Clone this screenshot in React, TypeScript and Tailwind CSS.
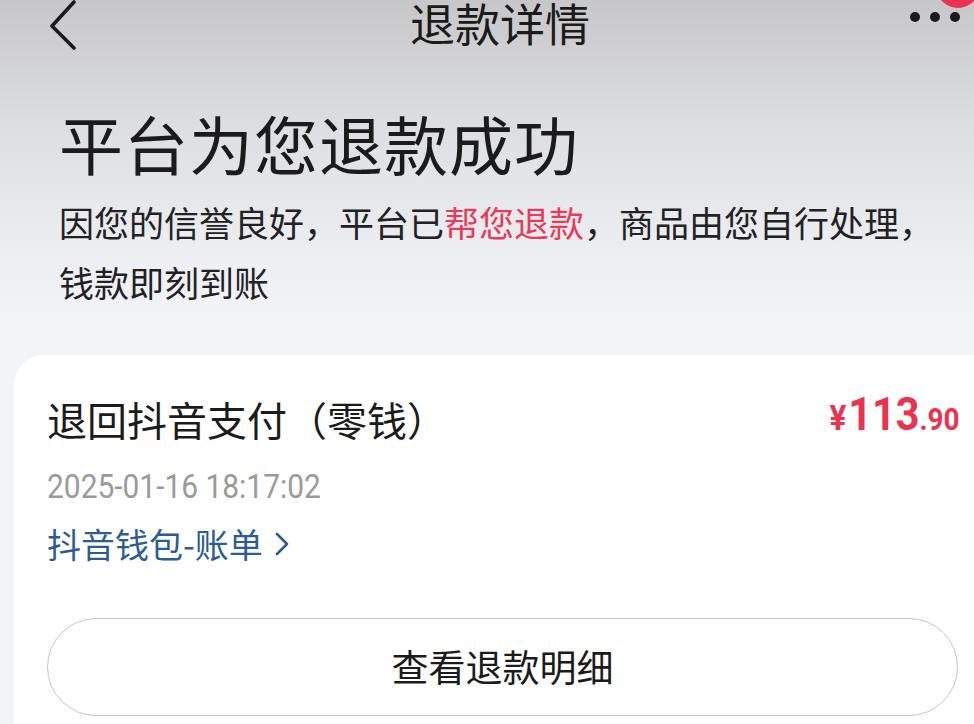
import React from 'react';

const cjk = { fontFamily: '"Noto Sans CJK SC", "Noto Sans", sans-serif' };
const num = { fontFamily: 'Roboto, "Noto Sans CJK SC", sans-serif' };

const App = () => {
  return (
    <div
      className="w-[974px] h-[724px] overflow-hidden bg-[linear-gradient(180deg,#c7c7c9_0px,#dcdde0_120px,#eeeff3_260px,#f3f4f8_330px,#f3f4f8_100%)] text-[#1b1b1b]"
      style={cjk}
    >
      {/* top bar */}
      <header className="relative h-[46px] flex items-center justify-center pl-[26px]">
        <svg className="absolute left-[46px] top-[0px]" width="34" height="50" viewBox="0 0 34 50" fill="none">
          <path d="M28 2 L6 26 L28 48" stroke="#1b1b1b" strokeWidth="3.6" strokeLinecap="round" strokeLinejoin="round" />
        </svg>
        <h1 className="text-[45px] leading-[46px] font-normal">退款详情</h1>
        <div className="absolute left-[910px] top-[12px] flex gap-[10px]">
          <span className="w-[10px] h-[10px] rounded-full bg-[#1b1b1b]" />
          <span className="w-[10px] h-[10px] rounded-full bg-[#1b1b1b]" />
          <span className="w-[10px] h-[10px] rounded-full bg-[#1b1b1b]" />
        </div>
        <span className="absolute left-[936px] top-[-36px] w-[44px] h-[44px] rounded-full bg-[#e8324f]" />
      </header>

      <div className="pl-[59px]">
        <h2 className="mt-[58px] text-[64px] leading-[76px] font-normal tracking-[1px]">平台为您退款成功</h2>
        <p className="mt-[12px] text-[35px] leading-[60px] text-[#222] whitespace-nowrap">
          因您的信誉良好，平台已<span className="text-[#e83a5a]">帮您退款</span>，商品由您自行处理，
          <br />
          钱款即刻到账
        </p>
      </div>

      {/* refund card */}
      <section className="mt-[43px] ml-[14px] -mr-[30px] bg-white rounded-[30px] pl-[33px] pr-[46px] pt-[37px] pb-[40px]">
        <div className="flex items-center justify-between">
          <span className="text-[40px] leading-[52px]">退回抖音支付（零钱）</span>
          <span className="flex items-baseline text-[#ea3350] font-bold -mt-[4px] -mr-[2px] scale-x-[0.9] origin-right" style={num}>
            <span className="text-[35px] mr-[2px]">¥</span>
            <span className="text-[46px] leading-[52px]">113</span>
            <span className="text-[31px]">.90</span>
          </span>
        </div>
        <div className="mt-[20px] text-[34px] leading-[40px] text-[#9a9a9a]" style={num}>
          <span className="inline-block scale-x-[0.88] origin-left">2025-01-16 18:17:02</span>
        </div>
        <div className="mt-[16px] flex items-center text-[34px] leading-[44px] text-[#2b5d94]">
          <span>抖音钱包-账单</span>
          <svg className="ml-[12px]" width="14" height="24" viewBox="0 0 14 24" fill="none">
            <path d="M2 2 L12 12 L2 22" stroke="#2b5d94" strokeWidth="2.6" strokeLinecap="round" strokeLinejoin="round" />
          </svg>
        </div>
        <button className="mt-[52px] w-full h-[98px] rounded-full border-[1.5px] border-[#c6c6c6] bg-white flex items-center justify-center text-[37px] text-[#1b1b1b]">
          查看退款明细
        </button>
      </section>
    </div>
  );
};

export default App;
